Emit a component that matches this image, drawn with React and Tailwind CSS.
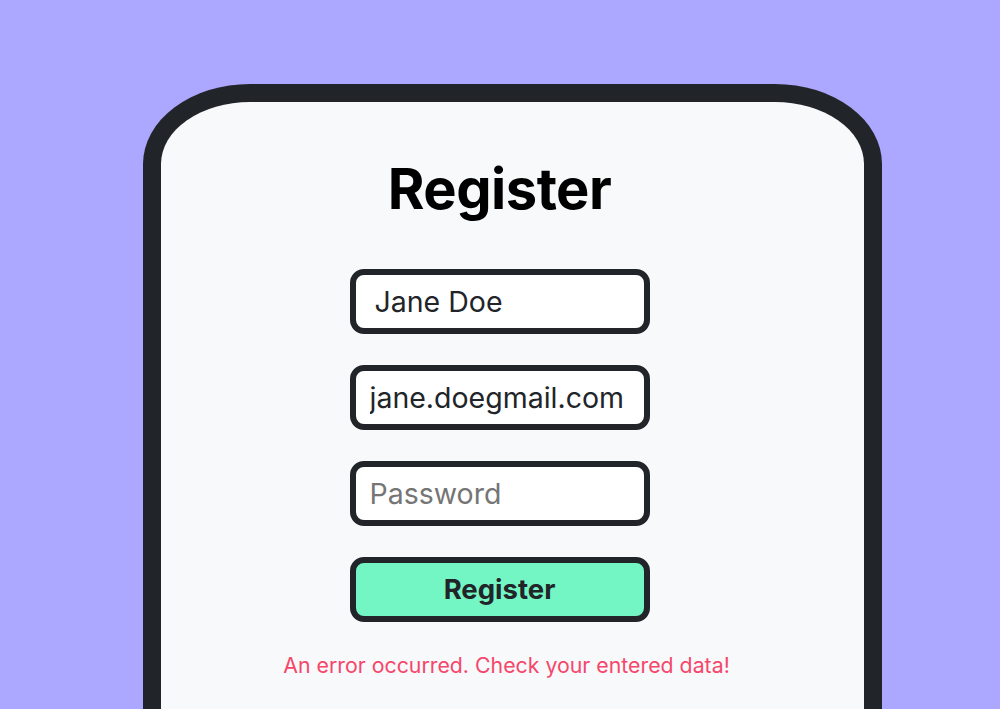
import React, { useState } from 'react';

function App() {
  const [name, setName] = useState('Jane Doe');
  const [email, setEmail] = useState('jane.doegmail.com');
  const [password, setPassword] = useState('');

  const inputCls =
    'w-[300px] h-[65px] bg-white border-[6px] border-[#212529] rounded-[14px] px-[14px] text-[28.5px] text-[#212529] placeholder:text-[#757575] outline-none';

  return (
    <div className="min-h-[709px] h-[709px] overflow-hidden bg-[#ada8ff] pt-[84px] font-['Inter',sans-serif]">
      {/* Phone frame */}
      <div className="ml-[143px] w-[739px] h-[700px] border-[18px] border-b-0 border-[#212428] bg-[#f8f9fa] rounded-t-[107px_80px]">
        <div className="flex flex-col items-center pr-[26px] pt-[53px]">
          <h1 className="text-[56px] leading-[68px] font-bold text-black tracking-[-0.5px]">Register</h1>

          <div className="flex flex-col gap-[31px] mt-[46px]">
            <input className={`${inputCls} pl-[19px]`} value={name} onChange={e => setName(e.target.value)} />
            <input className={inputCls} value={email} onChange={e => setEmail(e.target.value)} />
            <input className={inputCls} type="password" placeholder="Password" value={password} onChange={e => setPassword(e.target.value)} />
            <button className="w-[300px] h-[65px] bg-[#74f5c4] border-[6px] border-[#212529] rounded-[14px] text-[27.5px] font-bold text-[#212529]">
              Register
            </button>
          </div>

          <p className="mt-[28px] ml-[14px] text-[21.3px] text-[#f5476b]">An error occurred. Check your entered data!</p>
        </div>
      </div>
    </div>
  );
}

export default App;
